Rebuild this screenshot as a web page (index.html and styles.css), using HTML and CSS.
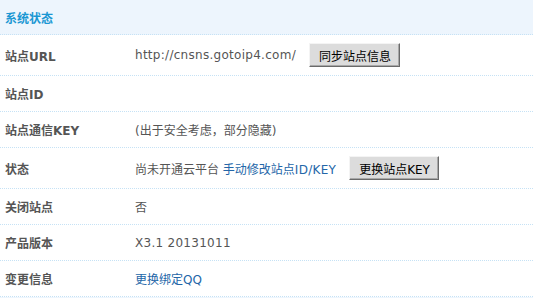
FILE: index.html
```html
<!DOCTYPE html>
<html>
<head>
<meta charset="utf-8">
<link rel="stylesheet" href="styles.css">
</head>
<body>
<div class="panel">
  <div class="head">系统状态</div>
  <div class="row tall">
    <div class="label">站点URL</div>
    <div class="value"><span class="latin">http://cnsns.gotoip4.com/</span><button class="btn">同步站点信息</button></div>
  </div>
  <div class="row">
    <div class="label">站点ID</div>
    <div class="value"></div>
  </div>
  <div class="row">
    <div class="label">站点通信KEY</div>
    <div class="value">(出于安全考虑，部分隐藏)</div>
  </div>
  <div class="row tall">
    <div class="label">状态</div>
    <div class="value">尚未开通云平台&nbsp;<a class="link" href="#">手动修改站点<span class="latin">ID/KEY</span></a><button class="btn">更换站点KEY</button></div>
  </div>
  <div class="row">
    <div class="label">关闭站点</div>
    <div class="value">否</div>
  </div>
  <div class="row">
    <div class="label">产品版本</div>
    <div class="value"><span class="latin">X3.1 20131011</span></div>
  </div>
  <div class="row">
    <div class="label">变更信息</div>
    <div class="value"><a class="link" href="#">更换绑定QQ</a></div>
  </div>
  <div class="foot"></div>
</div>
</body>
</html>
```
FILE: styles.css
```css
html, body {
  margin: 0;
  padding: 0;
  background: #fff;
}
body {
  font-family: "DejaVu Sans", "Noto Sans CJK SC", sans-serif;
  font-size: 12px;
  color: #555;
}
.panel {
  width: 533px;
}
.head {
  height: 34px;
  background: #edf5fd;
  border-bottom: 1px dotted #c6e2f5;
  color: #1a97d3;
  font-weight: bold;
  padding-left: 5px;
  display: flex;
  align-items: center;
}
.row {
  display: flex;
  align-items: center;
  height: 35px;
  border-bottom: 1px dotted #c6e2f5;
}
.row.tall {
  height: 40px;
}
.label {
  width: 130px;
  padding-left: 5px;
  font-weight: bold;
  color: #555;
  flex: none;
}
.value {
  display: flex;
  align-items: center;
  white-space: nowrap;
}
.latin {
  letter-spacing: 0.28px;
}
.link {
  color: #2366a8;
  text-decoration: none;
}
.btn {
  margin-left: 13px;
  height: 24px;
  padding: 0 8px 0 9px;
  background: #dcdcdc;
  border: 1px solid;
  border-color: #f4f4f4 #6a6a6a #6a6a6a #f4f4f4;
  box-shadow: inset -1px -1px 0 #a8a8a8;
  font-family: "DejaVu Sans", "Noto Sans CJK SC", sans-serif;
  font-size: 12px;
  color: #000;
}
.foot {
  height: 2px;
  background: #edf5fd;
}
```
